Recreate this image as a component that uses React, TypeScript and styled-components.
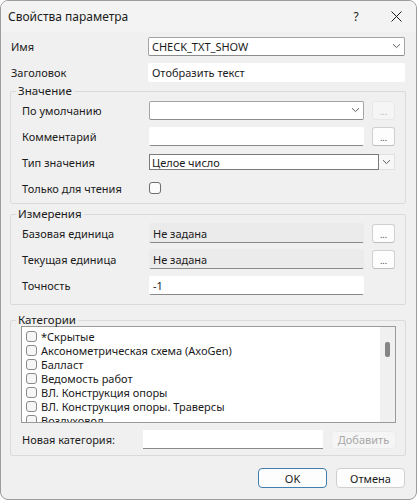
import styled, { createGlobalStyle } from "styled-components";

const GlobalStyle = createGlobalStyle`
  html, body {
    margin: 0;
    padding: 0;
    background: #ffffff;
  }
  body {
    font-family: "Noto Sans", "DejaVu Sans", sans-serif;
    font-size: 11px;
    color: #1b1b1b;
  }
  * {
    box-sizing: border-box;
  }
`;

const Window = styled.div`
  width: 417px;
  height: 500px;
  background: #f0f0f0;
  border: 1px solid #9c9c9c;
  border-radius: 8px;
  overflow: hidden;
  display: flex;
  flex-direction: column;
`;

const TitleBar = styled.div`
  height: 31px;
  display: flex;
  align-items: center;
  padding-left: 7px;
  background: #f3f3f3;
  font-size: 12px;
`;

const Title = styled.div`
  flex: 1;
`;

const TitleButton = styled.div`
  width: 40px;
  height: 30px;
  display: flex;
  align-items: center;
  justify-content: center;
  color: #1b1b1b;
`;

const Body = styled.div`
  display: flex;
  flex-direction: column;
`;

// Label column ends where the edit fields start (x = 148 on the dialog)
const Row = styled.div<{ $inGroup?: boolean }>`
  display: grid;
  grid-template-columns: ${(p) => (p.$inGroup ? 127 : 137)}px 215px 8px 23px;
  align-items: center;
  height: 26px;
  padding-left: ${(p) => (p.$inGroup ? 11 : 10)}px;
`;

const Label = styled.div`
  white-space: nowrap;
`;

const Wide = styled.div`
  grid-column: 2 / span 3;
  width: 257px;
`;

const Group = styled.fieldset<{ $top: number; $bottom: number }>`
  margin: ${(p) => p.$top}px 0 0 9px;
  width: 396px;
  padding: 0 0 ${(p) => p.$bottom}px 0;
  border: 1px solid #dadada;
  border-radius: 2px;
  min-width: 0;
`;

const Legend = styled.legend`
  font-size: 11.5px;
  line-height: 12px;
  padding: 0 2px;
  margin-left: 5px;
`;

const Box = styled.div<{ $tone?: "plain" | "flat" | "under" | "grey" }>`
  height: ${(p) => (p.$tone === "grey" ? 20 : 19)}px;
  display: flex;
  align-items: center;
  padding: 0 3px;
  background: ${(p) => (p.$tone === "grey" ? "#ebebeb" : "#ffffff")};
  border: 1px solid
    ${(p) => (p.$tone === "plain" ? "#a4a4a4" : "transparent")};
  border-bottom-color: ${(p) =>
    p.$tone === "plain" ? "#8c8c8c" : p.$tone === "flat" ? "transparent" : "#8a8a8a"};
  border-radius: 2px;
  white-space: nowrap;
`;

const ComboText = styled.span`
  flex: 1;
`;

const Chevron = () => (
  <svg width="9" height="6" viewBox="0 0 9 6">
    <path d="M1 1.2 L4.5 4.6 L8 1.2" fill="none" stroke="#5f5f5f" strokeWidth="1" />
  </svg>
);

const Select = styled.div`
  height: 16px;
  display: flex;
  width: 246px;
  grid-column: 2 / span 3;
`;

const SelectField = styled.div`
  width: 230px;
  background: #ffffff;
  border: 1px solid #7a7a7a;
  padding: 0 2px;
  display: flex;
  align-items: center;
`;

const SelectArrow = styled.div`
  flex: 1;
  display: flex;
  align-items: center;
  justify-content: center;
  background: #f7f7f7;
  border: 1px solid #e0e0e0;
  border-left: none;
`;

const DotsButton = styled.div<{ $disabled?: boolean }>`
  grid-column: 4;
  height: 19px;
  border: 1px solid ${(p) => (p.$disabled ? "#e8e8e8" : "#d0d0d0")};
  border-bottom-color: ${(p) => (p.$disabled ? "#e8e8e8" : "#bdbdbd")};
  border-radius: 3px;
  background: ${(p) => (p.$disabled ? "#f5f5f5" : "#fdfdfd")};
  color: ${(p) => (p.$disabled ? "#b0b0b0" : "#444")};
  font-size: 9px;
  display: flex;
  align-items: flex-end;
  justify-content: center;
  padding-bottom: 3px;
  line-height: 9px;
`;

const Check = styled.div<{ $size?: number }>`
  width: ${(p) => p.$size ?? 12}px;
  height: ${(p) => p.$size ?? 12}px;
  border: 1px solid ${(p) => (p.$size ? "#8a8a8a" : "#6e6e6e")};
  border-radius: 3px;
  background: ${(p) => (p.$size ? "#f6f6f6" : "#fbfbfb")};
`;

const ListBox = styled.div`
  margin: 0 0 0 10px;
  width: 375px;
  height: 97px;
  border: 1px solid #9a9a9a;
  background: #ffffff;
  display: flex;
  overflow: hidden;
`;

const ListItems = styled.div`
  flex: 1;
  padding: 2px 0 0 4px;
  overflow: hidden;
`;

const ListItem = styled.div`
  height: 14px;
  display: flex;
  align-items: center;
  gap: 4px;
  white-space: nowrap;
`;

const ScrollTrack = styled.div`
  width: 15px;
  background: #f0f0f0;
  display: flex;
  justify-content: center;
  padding-top: 15px;
`;

const ScrollThumb = styled.div`
  width: 5px;
  height: 15px;
  border-radius: 2px;
  background: #858585;
`;

const AddRow = styled.div`
  display: flex;
  align-items: center;
  height: 19px;
  margin-top: 7px;
  padding-left: 11px;
`;

const AddLabel = styled.div`
  width: 121px;
`;

const AddInput = styled.div`
  width: 180px;
  height: 19px;
  background: #ffffff;
  border-bottom: 1px solid #8a8a8a;
`;

const Button = styled.div<{ $primary?: boolean; $disabled?: boolean }>`
  height: 20px;
  display: flex;
  align-items: center;
  justify-content: center;
  border: 1px solid
    ${(p) => (p.$primary ? "#3f7fae" : p.$disabled ? "#ececec" : "#d0d0d0")};
  border-radius: 4px;
  background: ${(p) => (p.$disabled ? "#f5f5f5" : "#fdfdfd")};
  color: ${(p) => (p.$disabled ? "#a8a8a8" : "#1b1b1b")};
`;

const AddButton = styled(Button)`
  width: 65px;
  margin-left: 8px;
  height: 18px;
`;

const Footer = styled.div`
  display: flex;
  justify-content: flex-end;
  gap: 9px;
  margin-top: 12px;
  padding-right: 11px;
`;

const FooterButton = styled(Button)`
  width: 69px;
`;

const categories = [
  "*Скрытые",
  "Аксонометрическая схема (AxoGen)",
  "Балласт",
  "Ведомость работ",
  "ВЛ. Конструкция опоры",
  "ВЛ. Конструкция опоры. Траверсы",
  "Воздуховод",
];

export default function App() {
  return (
    <>
      <GlobalStyle />
      <Window>
        <TitleBar>
          <Title>Свойства параметра</Title>
          <TitleButton>?</TitleButton>
          <TitleButton>
            <svg width="11" height="11" viewBox="0 0 11 11">
              <path d="M0.5 0.5 L10.5 10.5 M10.5 0.5 L0.5 10.5" stroke="#1b1b1b" strokeWidth="1" />
            </svg>
          </TitleButton>
        </TitleBar>
        <Body>
          <Row style={{ marginTop: 1 }}>
            <Label>Имя</Label>
            <Wide>
              <Box $tone="plain">
                <ComboText>CHECK_TXT_SHOW</ComboText>
                <Chevron />
              </Box>
            </Wide>
          </Row>
          <Row>
            <Label>Заголовок</Label>
            <Wide>
              <Box $tone="flat">Отобразить текст</Box>
            </Wide>
          </Row>

          <Group $top={0} $bottom={2}>
            <Legend>Значение</Legend>
            <Row $inGroup>
              <Label>По умолчанию</Label>
              <Box $tone="plain">
                <ComboText />
                <Chevron />
              </Box>
              <DotsButton $disabled>...</DotsButton>
            </Row>
            <Row $inGroup>
              <Label>Комментарий</Label>
              <Box $tone="under" />
              <DotsButton>...</DotsButton>
            </Row>
            <Row $inGroup>
              <Label>Тип значения</Label>
              <Select>
                <SelectField>Целое число</SelectField>
                <SelectArrow>
                  <Chevron />
                </SelectArrow>
              </Select>
            </Row>
            <Row $inGroup>
              <Label>Только для чтения</Label>
              <Check />
            </Row>
          </Group>

          <Group $top={4} $bottom={6}>
            <Legend>Измерения</Legend>
            <Row $inGroup>
              <Label>Базовая единица</Label>
              <Box $tone="grey">Не задана</Box>
              <DotsButton>...</DotsButton>
            </Row>
            <Row $inGroup>
              <Label>Текущая единица</Label>
              <Box $tone="grey">Не задана</Box>
              <DotsButton>...</DotsButton>
            </Row>
            <Row $inGroup>
              <Label>Точность</Label>
              <Box $tone="under">-1</Box>
            </Row>
          </Group>

          <Group $top={9} $bottom={6}>
            <Legend>Категории</Legend>
            <ListBox>
              <ListItems>
                {categories.map((name) => (
                  <ListItem key={name}>
                    <Check $size={11} />
                    {name}
                  </ListItem>
                ))}
              </ListItems>
              <ScrollTrack>
                <ScrollThumb />
              </ScrollTrack>
            </ListBox>
            <AddRow>
              <AddLabel>Новая категория:</AddLabel>
              <AddInput />
              <AddButton $disabled>Добавить</AddButton>
            </AddRow>
          </Group>

          <Footer>
            <FooterButton $primary>OK</FooterButton>
            <FooterButton>Отмена</FooterButton>
          </Footer>
        </Body>
      </Window>
    </>
  );
}
